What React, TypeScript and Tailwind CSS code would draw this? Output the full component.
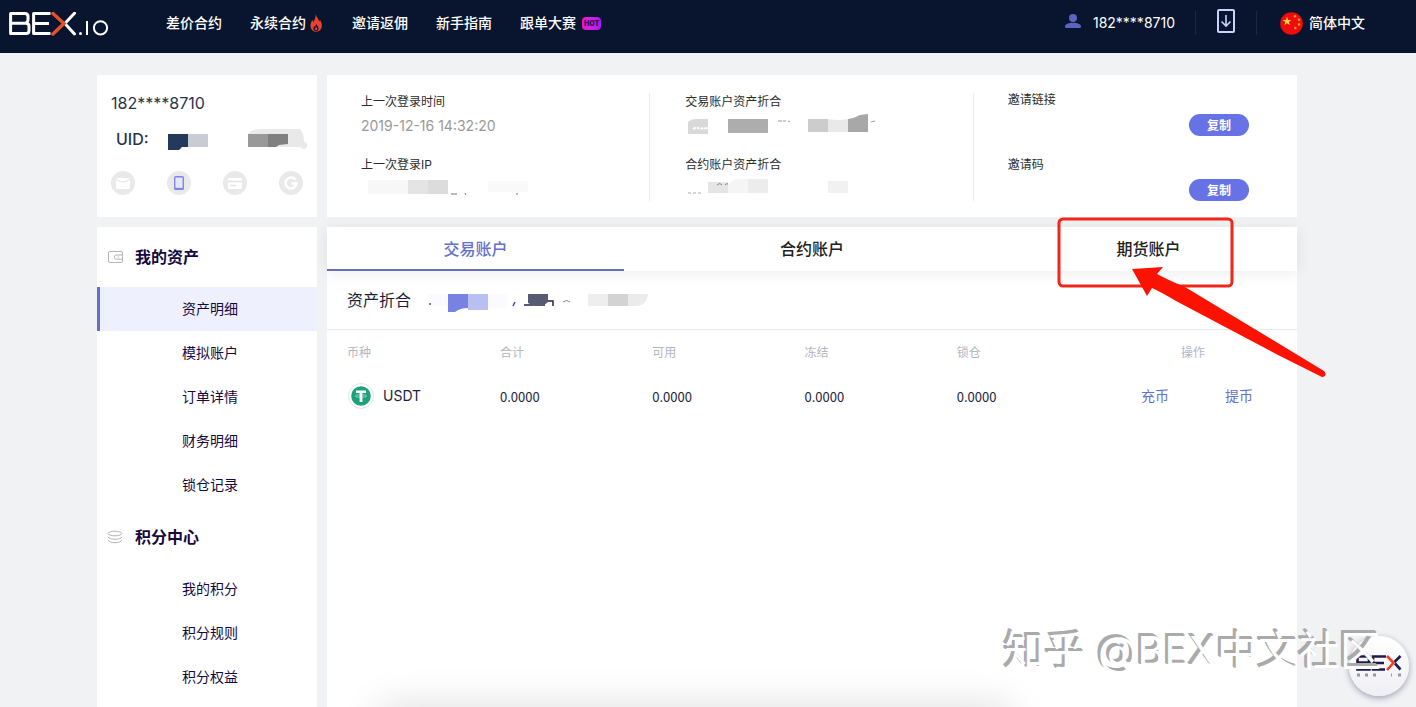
import React from 'react';

const navItems = ['差价合约', '永续合约', '邀请返佣', '新手指南', '跟单大赛'];

const menuGroups = [
  { title: '我的资产', icon: 'wallet', items: ['资产明细', '模拟账户', '订单详情', '财务明细', '锁仓记录'] },
  { title: '积分中心', icon: 'coins', items: ['我的积分', '积分规则', '积分权益'] },
];

function Logo() {
  return (
    <svg width="100" height="24" viewBox="0 0 100 24" fill="none" role="img" aria-label="BEX.io">
      <g stroke="#fff" strokeWidth="3" strokeLinejoin="round">
        <path d="M1.600 1.600h14.400q3 0 3 3v3q0 3.600-3 3.600H1.600zM1.600 11.200H17q3 0 3 3v4.400q0 3-3 3H1.600z" />
        <path d="M41.500 1.600H24.600v20H41.500M24.600 11.400H40" />
        <path d="M65.500 1.200L57 10.200M57 12.800L65.500 22" strokeLinecap="round" />
      </g>
      <path d="M44 1.500L55 11.600L44 22" stroke="#e8502a" strokeWidth="3.400" strokeLinecap="round" />
      <circle cx="71.500" cy="21.500" r="1.500" fill="#fff" />
      <path d="M78 9V23" stroke="#fff" strokeWidth="2" />
      <circle cx="91.500" cy="15.800" r="6.600" stroke="#fff" strokeWidth="2" />
    </svg>
  );
}

function Flame() {
  return (
    <svg width="12" height="18" viewBox="0 0 14 18" preserveAspectRatio="none">
      <path d="M6.500 0c.6 3 4 4.500 4 7.600l1.300-1.600c1.300 1.800 2 3.800 2 5.600 0 3.500-2.800 6.200-6.600 6.200S.5 15.100.5 11.800C.5 9 2 7.600 2.600 5.700l1.300 2.400C5.500 6 6.700 3.500 6.500 0z" fill="#e8432e" />
      <path d="M7 9.500c.4 2 3 2.600 3 5 0 1.700-1.300 2.800-3 2.800s-3-1-3-2.700c0-1.200.7-1.800 1-2.600l.8 1C6.700 12 7 11 7 9.500z" fill="#10152f" />
      <path d="M7.200 12.500c.2 1 1.200 1.500 1.200 2.600 0 .8-.6 1.300-1.400 1.300s-1.400-.5-1.400-1.300c0-1 1.400-1.400 1.600-2.600z" fill="#e8432e" />
    </svg>
  );
}

function Flag() {
  return (
    <svg width="24" height="24" viewBox="0 0 24 24">
      <circle cx="12.500" cy="12.500" r="11.300" fill="#f00c0c" />
      <path d="M8 5.800l1.100 3.100h3.300L9.800 10.900l1 3.200-2.800-1.900-2.700 1.900 1-3.200-2.700-2h3.400z" fill="#ffd83b" />
      <g fill="#f5a623">
        <circle cx="16" cy="5.300" r="1.200" />
        <circle cx="20" cy="8.800" r="1.200" />
        <circle cx="20" cy="13.500" r="1.200" />
        <circle cx="16.300" cy="17" r="1.200" />
      </g>
    </svg>
  );
}

function WalletIcon() {
  return (
    <svg width="16" height="14" viewBox="0 0 16 14" fill="none" stroke="#b4b4b4">
      <rect x="1.500" y="1.500" width="14" height="11" rx="1.500" />
      <path d="M15 5H9.500a2 2 0 0 0 0 4.200H15M10.500 7.100h1.500" />
    </svg>
  );
}

function CoinsIcon() {
  return (
    <svg width="16" height="14" viewBox="0 0 16 14" fill="none" stroke="#b4b4b4">
      <ellipse cx="8" cy="3.500" rx="6.800" ry="2.300" />
      <path d="M1.200 7c1 3 12.600 3 13.600 0M1.200 10c1 3.600 12.600 3.600 13.600 0" />
    </svg>
  );
}

function Verification() {
  return (
    <div className="mt-[19px] flex justify-between px-[13px]">
      <svg width="26" height="26" viewBox="0 0 26 26">
        <circle cx="13" cy="13" r="12" fill="#e9e9e9" />
        <rect x="6" y="8" width="14" height="11" rx="1" fill="#fff" />
        <path d="M6 9q7 6 14 0" fill="none" stroke="#e3e3e3" />
      </svg>
      <svg width="26" height="26" viewBox="0 0 26 26">
        <circle cx="13" cy="13" r="12" fill="#e9e9e9" />
        <rect x="8.700" y="6.700" width="8.600" height="12.600" rx="1" fill="#e6e7f6" stroke="#7f86e6" strokeWidth="1.400" />
        <path d="M8.500 18.800h9" stroke="#7f86e6" strokeWidth="2" />
      </svg>
      <svg width="26" height="26" viewBox="0 0 26 26">
        <circle cx="13" cy="13" r="12" fill="#e9e9e9" />
        <rect x="6" y="8" width="14" height="11" rx="1" fill="#fff" />
        <path d="M6 11.500h14M8 15.500h6" stroke="#e3e3e3" strokeWidth="1.300" />
      </svg>
      <svg width="26" height="26" viewBox="0 0 26 26">
        <circle cx="13" cy="13" r="12" fill="#e9e9e9" />
        <path d="M17.500 9.800A5.500 5.500 0 1 0 18.500 13.500H13.500" fill="none" stroke="#fff" strokeWidth="2.600" />
      </svg>
    </div>
  );
}

function Sidebar() {
  return (
    <nav className="mt-[10px] flex-1 bg-white text-[#14083f]">
      {menuGroups.map((group) => (
        <section key={group.title}>
          <h2 className="flex h-[60px] items-center gap-3 pl-[10px] text-base font-bold">
            {group.icon === 'wallet' ? <WalletIcon /> : <CoinsIcon />}
            {group.title}
          </h2>
          <ul>
            {group.items.map((item) => (
              <li key={item}>
                <a
                  href="#"
                  className={
                    item === '资产明细'
                      ? 'flex h-11 items-center justify-center border-x-[3px] border-l-[#6470cc] border-r-[#eef0fd] bg-[#eef0fd] pl-[6px] text-sm'
                      : 'flex h-11 items-center justify-center pl-[6px] text-sm'
                  }
                >
                  {item}
                </a>
              </li>
            ))}
          </ul>
        </section>
      ))}
    </nav>
  );
}

function CopyRow({ label }: { label: string }) {
  return (
    <div>
      <div className="text-xs leading-4">{label}</div>
      <div className="mt-[6px] flex justify-end pr-12">
        <button type="button" aria-label={'复制' + label} className="h-[22px] w-[60px] rounded-full bg-[#6672e5] pt-px text-xs font-bold text-white">
          复制
        </button>
      </div>
    </div>
  );
}

function AccountSummary() {
  return (
    <section className="grid h-[142px] grid-cols-3 bg-white py-[18px] text-xs text-[#2c2c2c]">
      <div className="border-r border-[#ececec] pt-px pl-[34px]">
        <div className="leading-4">上一次登录时间</div>
        <div className="mt-[6px] text-sm leading-5 text-[#999]">2019-12-16 14:32:20</div>
        <div className="mt-[21px] leading-4">上一次登录IP</div>
        <svg className="mt-[6px]" width="180" height="18" viewBox="0 0 180 18">
          <path d="M7 1h40v14H7z" fill="#f7f7f7" />
          <path d="M47 1h20v14H47z" fill="#e4e4e4" />
          <path d="M67 1h20v14H67z" fill="#dcdcdc" />
          <path d="M127 2h40v11h-40z" fill="#f9f9f9" />
          <path d="M90 15h6M104 14l1 2M155 15h2" stroke="#777" />
        </svg>
      </div>
      <div className="border-r border-[#ececec] pt-px pl-[35px]">
        <div className="leading-4">交易账户资产折合</div>
        <svg className="mt-1" width="200" height="20" viewBox="0 0 200 20">
          <path d="M3 8q3-3 8-3h12v15H3z" fill="#d9d9d9" />
          <path d="M8 15q3-2 5-1t10 0" stroke="#fff" strokeWidth="2" strokeDasharray="3 1" fill="none" />
          <path d="M43 5h40v14H43z" fill="#adadad" />
          <path d="M93 7h8M103 7l2 1M186 8l4 -1" stroke="#999" strokeDasharray="4 1" />
          <path d="M123 5h20v13h-20z" fill="#ccc" />
          <path d="M143 5q10 2 20 0v13h-20z" fill="#e9e9e9" />
          <path d="M163 5q7-1 12-4l8-1v18h-20z" fill="#a8a8a8" />
        </svg>
        <div className="mt-[23px] leading-4">合约账户资产折合</div>
        <svg className="mt-[6px]" width="200" height="18" viewBox="0 0 200 18">
          <path d="M3 14h15" stroke="#aaa" strokeDasharray="3 2" />
          <path d="M23 3h20v11H23z" fill="#e5e5e5" />
          <path d="M32 6q3-3 5 0M40 6q2-3 4 0" fill="none" stroke="#888" />
          <path d="M43 5l8-5h12v14H43z" fill="#f5f5f5" />
          <path d="M63 0h20v14H63z" fill="#ececec" />
          <path d="M143 2h20v12h-20z" fill="#f1f1f1" />
        </svg>
      </div>
      <div className="-mt-px pl-[34px]">
        <CopyRow label="邀请链接" />
        <div className="mt-[21px]">
          <CopyRow label="邀请码" />
        </div>
      </div>
    </section>
  );
}

function Tabs() {
  return (
    <div role="tablist" className="flex h-11 justify-between bg-white text-base font-medium text-[#222] shadow-[0_2px_16px_rgba(0,0,0,0.08)]">
      <button type="button" role="tab" aria-selected="true" className="w-[297px] border-b-2 border-[#6470b8] pt-[2px] text-[#6470cc]">
        交易账户
      </button>
      <button type="button" role="tab" aria-selected="false" className="w-[297px]">
        合约账户
      </button>
      <button type="button" role="tab" aria-selected="false" className="w-[297px]">
        期货账户
      </button>
    </div>
  );
}

function Assets() {
  return (
    <section className="mt-[10px] flex flex-1 flex-col bg-white">
      <Tabs />
      <div className="flex h-[59px] items-center border-b border-[#e9ebee] pl-5 text-[#1d1d3a]">
        <span className="text-base">资产折合</span>
        <svg className="ml-4" width="230" height="24" viewBox="0 0 230 24">
          <path d="M0 6h20v12H5zM60 6h20v14H60z" fill="#fafaff" />
          <path d="M21 6h20v14q-8 0-13 4l-7 2z" fill="#7882e2" />
          <path d="M41 6h20v16H41z" fill="#b8bff3" />
          <path d="M2 16h2M88 14l-2 4" stroke="#444a99" strokeWidth="1.500" />
          <path d="M97 17h9M117 18v-5h9v5" stroke="#22233d" strokeWidth="1.500" fill="none" />
          <path d="M101 6h20v8l-5 4h-9l-6-3z" fill="#565a72" />
          <path d="M136 14q4-3 7 0" stroke="#888" fill="none" />
          <path d="M161 6h20v12h-20z" fill="#eee" />
          <path d="M181 6h20v12h-20z" fill="#d3d3d3" />
          <path d="M201 6h20q-2 12-12 12h-8z" fill="#ebebeb" />
        </svg>
      </div>
      <table className="w-full table-fixed text-left text-sm">
        <thead>
          <tr className="h-[46px] text-xs text-[#b3b6bf]">
            <th className="w-[173px] pl-5 font-normal">币种</th>
            <th className="font-normal">合计</th>
            <th className="font-normal">可用</th>
            <th className="font-normal">冻结</th>
            <th className="font-normal">锁仓</th>
            <th className="w-[188px] pr-5 text-center font-normal">操作</th>
          </tr>
        </thead>
        <tbody>
          <tr className="h-10 text-[#1d2340]">
            <td className="pl-5">
              <div className="flex items-center gap-2">
                <svg width="28" height="28" viewBox="0 0 28 28">
                  <circle cx="14" cy="14" r="12.500" fill="#fff" stroke="#dfe8e6" />
                  <circle cx="14" cy="14" r="9.800" fill="#1ba27a" />
                  <path d="M9 8.500h10v2.600h-3.600V20h-2.800v-8.900H9z" fill="#fff" />
                  <ellipse cx="14" cy="14" rx="5.500" ry="1.300" fill="none" stroke="#fff" strokeWidth="0.500" />
                </svg>
                USDT
              </div>
            </td>
            {['合计', '可用', '冻结', '锁仓'].map((column) => (
              <td key={column} className="pt-[2px] font-['Noto_Sans_CJK_SC',sans-serif] text-[13px]">0.0000</td>
            ))}
            <td>
              <div className="flex justify-between pr-11 pl-8 text-[#6470cc]">
                <a href="#">充币</a>
                <a href="#">提币</a>
              </div>
            </td>
          </tr>
        </tbody>
      </table>
    </section>
  );
}

function Header() {
  return (
    <header className="flex h-[53px] items-start bg-[#09152e] pr-[51px] pl-[9px] text-sm font-medium text-white">
      <a href="#" className="mt-3">
        <Logo />
      </a>
      <nav className="ml-[57px] flex h-[46px] items-center gap-7">
        {navItems.map((item) => (
          <a key={item} href="#" className="flex items-center">
            {item}
            {item === '永续合约' && <span className="mr-[2px] ml-1"><Flame /></span>}
            {item === '跟单大赛' && (
              <span className="ml-[6px] rounded-sm bg-linear-to-r from-[#f00fc8] to-[#a416f5] px-[2px] text-[7px] leading-[13px] font-black text-[#3b0a5c]">HOT</span>
            )}
          </a>
        ))}
      </nav>
      <div className="ml-auto flex h-[46px] items-center">
        <a href="#" className="flex items-center gap-3 font-normal">
          <svg width="16" height="20" viewBox="0 0 16 20" fill="#5c64bd">
            <circle cx="8" cy="5" r="4" />
            <path d="M0 13.500C0 8.500 16 8.500 16 13.500q0 1.500-1.500 1.500h-13Q0 15 0 13.500z" />
          </svg>
          182****8710
        </a>
        <div className="ml-5 flex h-6 w-[62px] items-center justify-center border-x border-[#1b2640]">
          <button type="button" aria-label="下载" className="-mt-1">
            <svg width="20" height="26" viewBox="0 0 20 26" fill="none" stroke="#c9d2fa" strokeWidth="2">
              <rect x="2" y="2" width="16" height="22" rx="1" />
              <path d="M10 7v11M5.500 13.500L10 18l4.500-4.500" strokeWidth="1.600" />
            </svg>
          </button>
        </div>
        <button type="button" className="ml-[22px] flex items-center gap-[6px]">
          <Flag />
          简体中文
        </button>
      </div>
    </header>
  );
}

function Annotation() {
  return (
    <svg className="pointer-events-none absolute top-[216px] left-[1056px]" width="274" height="164" viewBox="0 0 274 164">
      <rect x="3" y="3" width="173" height="67" rx="4" fill="none" stroke="#f0261b" strokeWidth="3" />
      <path d="M76 53L107 51L101 58Q112 64 129 71L268 155Q271 160 266 161L222 139L120 85Q105 76 96 72L91 80Z" fill="#fb1200" />
      <circle cx="267" cy="158" r="2.500" fill="#fb1200" />
    </svg>
  );
}

function SupportBadge() {
  return (
    <button type="button" aria-label="BEX 客服" className="absolute right-[7px] bottom-[11px] flex size-[60px] flex-col items-center justify-center rounded-full bg-linear-to-b from-white to-[#efeff4] shadow-[0_2px_6px_rgba(40,40,80,0.4)]">
      <svg width="46" height="24" viewBox="0 0 46 24" fill="none" stroke="#1c1c4c" strokeWidth="2.600">
        <path d="M1.500 2.500H13v6H1.500zM1.500 8.500h12v7h-12zM30 2.500H17v13h12M17 9h11M44.500 2L38.500 8M39 9.500l5.500 6" />
        <path d="M31 2L37.500 8.800L31 16" stroke="#f03e24" />
        <path d="M1 21h3M9 21h3M17 21h3M35 21h1M42 21h3" stroke="#98989f" strokeWidth="3" />
      </svg>
    </button>
  );
}

export default function App() {
  return (
    <div className="relative flex h-screen flex-col overflow-hidden bg-[#f1f2f4] font-['Inter','Noto_Sans_CJK_SC',sans-serif]">
      <Header />
      <main className="min-h-0 flex-1 pt-[22px] pr-[22px]">
        <div className="mx-auto flex h-full max-w-[1200px] gap-[10px]">
          <aside className="flex w-[220px] shrink-0 flex-col">
            <section className="h-[142px] shrink-0 bg-white pt-4 text-base text-[#26344d]">
              <div className="pl-[14px]">182****8710</div>
              <div className="mt-3 flex items-center gap-[19px] pl-[19px] font-medium">
                UID:
                <svg width="142" height="24" viewBox="0 0 142 24">
                  <path d="M0 7h20v13h-6l-3 3H0z" fill="#243a5a" />
                  <path d="M20 7h20v13H20z" fill="#c8ccd5" />
                  <path d="M80 8q1-6 14-6h38q4 4 4 13 4 0 3 5-3 4-7 0H80z" fill="#e9e9e9" />
                  <path d="M80 7h20v13H80z" fill="#999" />
                  <path d="M100 7h20v10l-9 1-3 2h-8z" fill="#808080" />
                </svg>
              </div>
              <Verification />
            </section>
            <Sidebar />
          </aside>
          <div className="flex min-w-0 flex-1 flex-col">
            <AccountSummary />
            <Assets />
          </div>
        </div>
      </main>
      <div className="pointer-events-none absolute -bottom-10 left-[380px] h-10 w-[630px] shadow-[0_0_40px_rgba(0,0,0,0.14)]" />
      <Annotation />
      <SupportBadge />
      <div className="pointer-events-none absolute right-[35px] bottom-[26px] text-[41px] leading-[60px] whitespace-nowrap text-white [text-shadow:-2px_-2px_0_#aaaaaa,-3px_-3px_0_#aaaaaa]">
        知乎 @BEX中文社区
      </div>
    </div>
  );
}
